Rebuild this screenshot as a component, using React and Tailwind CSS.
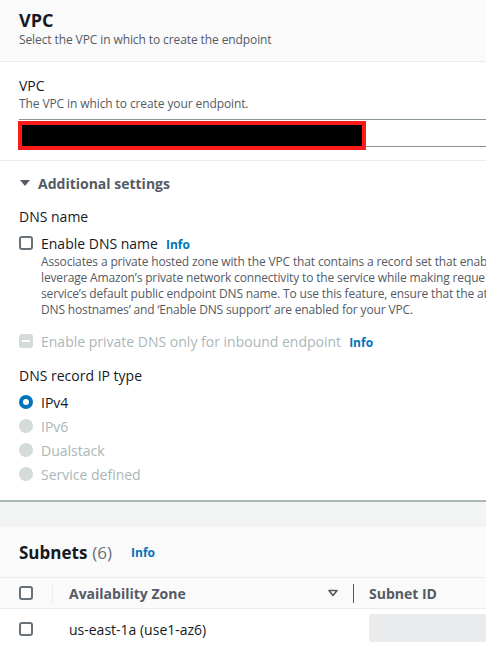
import React from "react";

const font = { fontFamily: '"Open Sans", "Noto Sans", sans-serif' };

function Info({ className = "ml-2" }) {
  return <span className={`text-[12px] font-bold text-[#0073bb] ${className}`}>Info</span>;
}

function Checkbox({ disabled, indeterminate }) {
  if (disabled) {
    return (
      <span className="w-[14px] h-[14px] rounded-[3px] bg-[#d5dbdb] flex items-center justify-center shrink-0">
        {indeterminate && <span className="w-[8px] h-[2px] bg-white" />}
      </span>
    );
  }
  return <span className="w-[14px] h-[14px] rounded-[3px] border-2 border-[#687078] bg-white shrink-0" />;
}

function Radio({ checked, label }) {
  return (
    <div className="flex items-center h-[24px]">
      {checked ? (
        <span className="w-[14px] h-[14px] rounded-full border-[4px] border-[#0073bb] bg-white shrink-0" />
      ) : (
        <span className="w-[14px] h-[14px] rounded-full bg-[#d5dbdb] shrink-0" />
      )}
      <span className={`ml-[8px] text-[14px] ${checked ? "text-[#16191f]" : "text-[#aab7b8]"}`}>{label}</span>
    </div>
  );
}

export default function App() {
  return (
    <div className="w-[486px] h-[646px] overflow-hidden bg-white text-[#16191f]" style={font}>
      {/* header */}
      <div className="h-[62px] bg-[#fafafa] border-b border-[#eaeded] px-[19px] pt-[9px]">
        <div className="text-[18px] font-bold leading-[22px]">VPC</div>
        <div className="text-[12px] leading-[16px] text-[#545b64] mt-[1px] tracking-[-0.1px]">Select the VPC in which to create the endpoint</div>
      </div>

      {/* vpc field */}
      <div className="h-[99px] border-b border-[#eaeded] pl-[19px] pt-[15px]">
        <div className="text-[14px] leading-[18px]">VPC</div>
        <div className="text-[12px] leading-[16px] text-[#545b64] mt-[1px] tracking-[-0.1px]">The VPC in which to create your endpoint.</div>
        <div className="relative h-[28px] mt-[7px] border-y border-[#879596]">
          <div className="absolute left-[-1px] top-[1px] w-[348px] h-[29px] border-[4px] border-[#ff1a1a] bg-black" />
        </div>
      </div>

      {/* additional settings */}
      <div className="h-[341px] pl-[19px] pt-[12px] border-b-2 border-[#aab7b8]">
        <div className="flex items-center h-[20px]">
          <svg width="10" height="10" viewBox="0 0 10 10" className="ml-[1px]">
            <path d="M0 2h10L5 8z" fill="#545b64" />
          </svg>
          <span className="ml-[8px] text-[14px] font-bold text-[#545b64]">Additional settings</span>
        </div>

        <div className="text-[14px] leading-[18px] mt-[15px]">DNS name</div>
        <div className="flex items-center h-[20px] mt-[7px]">
          <Checkbox />
          <span className="ml-[8px] flex items-baseline">
            <span className="text-[14px]">Enable DNS name</span>
            <Info />
          </span>
        </div>
        <div className="ml-[22px] text-[12px] leading-[16px] text-[#545b64] whitespace-nowrap mt-[1px] tracking-[-0.15px]">
          <div>Associates a private hosted zone with the VPC that contains a record set that enab</div>
          <div>leverage Amazon’s private network connectivity to the service while making reque</div>
          <div>service’s default public endpoint DNS name. To use this feature, ensure that the at</div>
          <div>DNS hostnames’ and ‘Enable DNS support’ are enabled for your VPC.</div>
        </div>

        <div className="flex items-center h-[20px] mt-[13px]">
          <Checkbox disabled indeterminate />
          <span className="ml-[8px] flex items-baseline">
            <span className="text-[14px] text-[#aab7b8]">Enable private DNS only for inbound endpoint</span>
            <Info />
          </span>
        </div>

        <div className="text-[14px] leading-[18px] mt-[16px]">DNS record IP type</div>
        <div className="mt-[5px]">
          <Radio checked label="IPv4" />
          <Radio label="IPv6" />
          <Radio label="Dualstack" />
          <Radio label="Service defined" />
        </div>
      </div>

      {/* gray gap */}
      <div className="h-[24px] bg-[#f2f3f3] border-b border-[#eaeded]" />

      {/* subnets */}
      <div className="bg-[#fafafa]">
        <div className="h-[51px] px-[19px] flex items-center pt-[3px]">
          <span className="text-[17px] font-bold">Subnets</span>
          <span className="text-[17px] text-[#687078] ml-[5px]">(6)</span>
          <Info className="ml-[19px]" />
        </div>
        <div className="h-[32px] border-y border-[#eaeded] flex items-center text-[14px] font-bold text-[#545b64]">
          <div className="w-[52px] pl-[19px] flex items-center">
            <Checkbox />
          </div>
          <div className="w-px h-[19px] bg-[#eaeded]" />
          <div className="w-[300px] pl-[16px] pr-[15px] flex items-center justify-between">
            <span>Availability Zone</span>
            <svg width="10" height="8" viewBox="0 0 10 8">
              <path d="M1 1.5h8L5 6.5z" fill="none" stroke="#545b64" strokeWidth="1.6" strokeLinejoin="round" />
            </svg>
          </div>
          <div className="w-px h-[19px] bg-[#545b64]" />
          <span className="pl-[15px]">Subnet ID</span>
        </div>
      </div>
      <div className="h-[40px] flex items-center bg-white text-[14px]">
        <div className="w-[69px] pl-[19px] flex items-center">
          <Checkbox />
        </div>
        <span className="w-[300px]">us-east-1a (use1-az6)</span>
        <div className="h-[28px] flex-1 bg-[#e9ebed] rounded-l-[3px] self-start mt-[5px]" />
      </div>
    </div>
  );
}
